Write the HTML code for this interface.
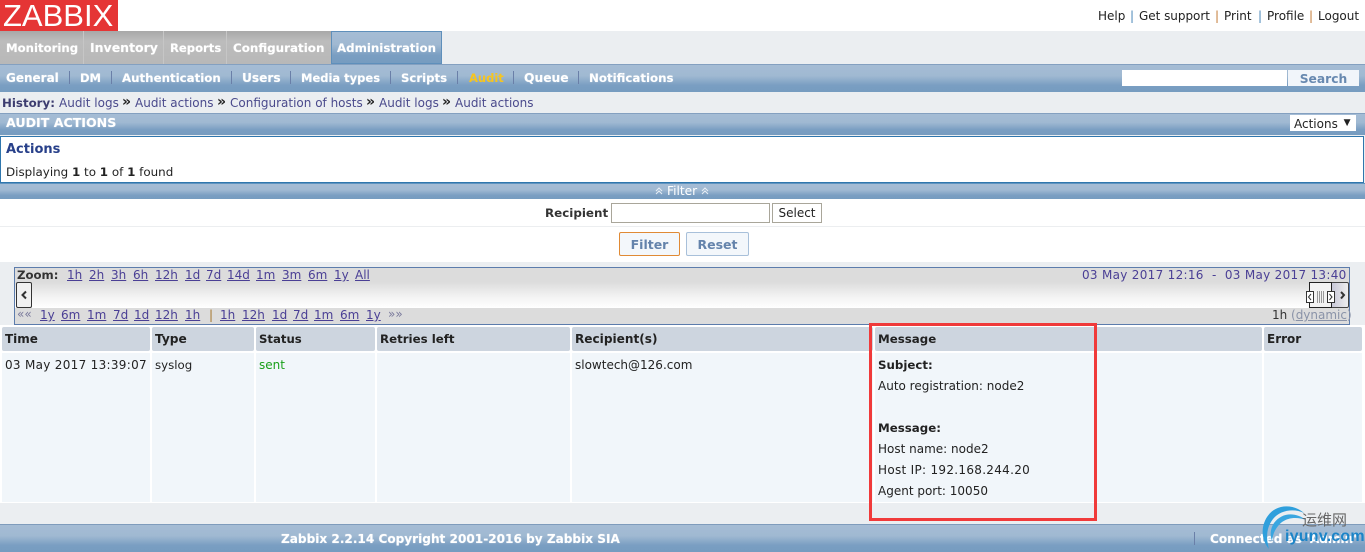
<!DOCTYPE html>
<html><head><meta charset="utf-8">
<style>
html,body{margin:0;padding:0;background:#ebeef1;width:1365px;height:552px;overflow:hidden}
body{position:relative;font-family:"DejaVu Sans","Liberation Sans",sans-serif;font-size:12px;color:#222}
.a{position:absolute;white-space:nowrap;line-height:14px}
.box{position:absolute}
.bar{background:linear-gradient(#a5bcd5 0,#a0b9d2 40%,#7a9ec2 75%,#769cc0 100%)}
.w{color:#fff;font-weight:bold;text-shadow:0 0 1px rgba(255,255,255,.6)}
.l{color:#4a4a8c}
.u{color:#4a3f95;text-decoration:underline}
.sep{position:absolute;width:1px;height:13px;background:#6a7fa8}
.th{position:absolute;top:327px;height:24px;background:#cdd5df;border-radius:2px}
.td{position:absolute;top:353px;height:149px;background:#f1f6fa}
.h{font-weight:bold;top:332px}
b{font-weight:bold}
</style></head><body>
<div class="box" style="left:0;top:0;width:1365px;height:31px;background:#fff"></div>
<div class="box" style="left:0;top:0;width:118px;height:31px;background:#e53535"></div>
<div class="a" style="left:3px;top:-2px;font:31px/36px 'Liberation Sans',sans-serif;color:#fff">ZABBIX</div>
<div class="a" style="left:1098px;top:9px">Help</div>
<div class="a" style="left:1130px;top:9px;color:#4a86b8">|</div>
<div class="a" style="left:1139px;top:9px;letter-spacing:-.03px">Get support</div>
<div class="a" style="left:1215px;top:9px;color:#c47a36">|</div>
<div class="a" style="left:1224px;top:9px">Print</div>
<div class="a" style="left:1258px;top:9px;color:#4a86b8">|</div>
<div class="a" style="left:1267px;top:9px">Profile</div>
<div class="a" style="left:1309px;top:9px;color:#c47a36">|</div>
<div class="a" style="left:1318px;top:9px">Logout</div>

<div class="box" style="left:0;top:31px;width:331px;height:33px;background:#c6c6c6"></div>
<div class="box" style="left:0;top:31px;width:83px;height:33px;background:linear-gradient(#a8a8a8,#bcbcbc 30%,#b8b8b8)"></div>
<div class="box" style="left:84px;top:31px;width:79px;height:33px;background:linear-gradient(#a8a8a8,#bcbcbc 30%,#b8b8b8)"></div>
<div class="box" style="left:164px;top:31px;width:62px;height:33px;background:linear-gradient(#a8a8a8,#bcbcbc 30%,#b8b8b8)"></div>
<div class="box" style="left:227px;top:31px;width:104px;height:33px;background:linear-gradient(#a8a8a8,#bcbcbc 30%,#b8b8b8)"></div>
<div class="box bar" style="left:331px;top:31px;width:109px;height:31px;border:1px solid #5e8fbb"></div>
<div class="a w" style="left:6px;top:41px;font-size:11.7px">Monitoring</div>
<div class="a w" style="left:90px;top:41px;font-size:12.5px">Inventory</div>
<div class="a w" style="left:170px;top:41px;font-size:11.6px">Reports</div>
<div class="a w" style="left:233px;top:41px;font-size:11.9px">Configuration</div>
<div class="a w" style="left:337px;top:41px;font-size:11.8px">Administration</div>

<div class="box bar" style="left:0;top:64px;width:1365px;height:28px;border-top:1px solid #84a0c0;box-sizing:border-box"></div>
<div class="a w" style="left:6px;top:71px;font-size:12px">General</div><div class="sep" style="left:69px;top:71px"></div>
<div class="a w" style="left:80px;top:71px;font-size:11.5px">DM</div><div class="sep" style="left:111px;top:71px"></div>
<div class="a w" style="left:122px;top:71px;font-size:11.8px">Authentication</div><div class="sep" style="left:231px;top:71px"></div>
<div class="a w" style="left:242px;top:71px;font-size:12.2px">Users</div><div class="sep" style="left:290px;top:71px"></div>
<div class="a w" style="left:301px;top:71px;font-size:11.5px">Media types</div><div class="sep" style="left:390px;top:71px"></div>
<div class="a w" style="left:401px;top:71px;font-size:11.7px">Scripts</div><div class="sep" style="left:457px;top:71px"></div>
<div class="a w" style="left:469px;top:71px;font-size:11.5px;color:#f7c51e;text-shadow:none">Audit</div><div class="sep" style="left:513px;top:71px"></div>
<div class="a w" style="left:524px;top:71px;font-size:12.3px">Queue</div><div class="sep" style="left:578px;top:71px"></div>
<div class="a w" style="left:589px;top:71px;font-size:11.8px">Notifications</div>
<div class="box" style="left:1122px;top:70px;width:165px;height:16px;background:#fff"></div>
<div class="box" style="left:1288px;top:70px;width:71px;height:16px;background:#f1f5fa;color:#6889b0;font-weight:bold;font-size:12.3px;line-height:18px;text-align:center">Search</div>

<div class="a" style="left:2px;top:96px;font-weight:bold;color:#3d3d70;font-size:11.8px">History:</div>
<div class="a l" style="left:59px;top:96px">Audit logs</div>
<div class="a" style="left:122px;top:95px;font-weight:bold;color:#222;font-size:14px">»</div>
<div class="a l" style="left:135px;top:96px">Audit actions</div>
<div class="a" style="left:217px;top:95px;font-weight:bold;color:#222;font-size:14px">»</div>
<div class="a l" style="left:230px;top:96px">Configuration of hosts</div>
<div class="a" style="left:366px;top:95px;font-weight:bold;color:#222;font-size:14px">»</div>
<div class="a l" style="left:379px;top:96px">Audit logs</div>
<div class="a" style="left:442px;top:95px;font-weight:bold;color:#222;font-size:14px">»</div>
<div class="a l" style="left:455px;top:96px">Audit actions</div>

<div class="box bar" style="left:0;top:113px;width:1365px;height:22px;border-top:1px solid #84a0c0;box-sizing:border-box"></div>
<div class="a w" style="left:6px;top:116px;font-size:12.6px">AUDIT ACTIONS</div>
<div class="box" style="left:1290px;top:115px;width:66px;height:16px;background:#fff;font-size:12px;line-height:18px;padding-left:4px;box-sizing:border-box">Actions <span style="font-size:9px;position:relative;top:-3px;left:2px">▼</span></div>

<div class="box" style="left:0;top:136px;width:1364px;height:47px;background:#fff;border:1px solid #2f76ad;box-sizing:border-box"></div>
<div class="a" style="left:6px;top:143px;font-weight:bold;color:#28408a;font-size:13px">Actions</div>
<div class="a" style="left:6px;top:165px;font-size:11.9px">Displaying <b>1</b> to <b>1</b> of <b>1</b> found</div>

<div class="box bar" style="left:0;top:183px;width:1365px;height:16px;border-top:1px solid #5f93bf;box-sizing:border-box"></div>
<svg class="box" style="left:655px;top:186px" width="54" height="10"><path d="M1 5 4 2 7 5M1 8 4 5 7 8M47 5 50 2 53 5M47 8 50 5 53 8" fill="none" stroke="#e8eef5"/></svg>
<div class="a" style="left:667px;top:184px;color:#fff;font-size:12.2px">Filter</div>
<div class="box" style="left:0;top:199px;width:1365px;height:63px;background:#fff"></div>
<div class="box" style="left:0;top:226px;width:1365px;height:1px;background:#eceef0"></div>
<div class="a" style="left:545px;top:206px;font-weight:bold;color:#333;font-size:11.9px">Recipient</div>
<div class="box" style="left:611px;top:203px;width:159px;height:20px;background:#fff;border:1px solid #a9a69a;box-sizing:border-box"></div>
<div class="box" style="left:772px;top:203px;width:50px;height:20px;background:#fff;border:1px solid #a9a69a;box-sizing:border-box;text-align:center;line-height:19px">Select</div>
<div class="box" style="left:619px;top:232px;width:61px;height:24px;background:#f3f7fb;border:1px solid #e08a35;border-radius:2px;box-sizing:border-box;text-align:center;line-height:23px;font-weight:bold;color:#6483ab;font-size:12.5px">Filter</div>
<div class="box" style="left:686px;top:232px;width:63px;height:24px;background:#f3f7fb;border:1px solid #a8c0da;border-radius:2px;box-sizing:border-box;text-align:center;line-height:23px;font-weight:bold;color:#6483ab;font-size:12.5px">Reset</div>

<div class="box" style="left:14px;top:267px;width:1336px;height:58px;background:#dcdcdc;border:1px solid #5c7cac;box-sizing:border-box"></div>
<div class="box" style="left:15px;top:282px;width:1334px;height:26px;background:linear-gradient(#dcdcdc,#f4f4f4 60%,#fff)"></div>
<div class="a" style="left:17px;top:268px;font-weight:bold;color:#333;font-size:11.7px">Zoom:</div>
<div class="a u" style="left:67px;top:268px">1h</div><div class="a u" style="left:89px;top:268px">2h</div><div class="a u" style="left:111px;top:268px">3h</div><div class="a u" style="left:133px;top:268px">6h</div><div class="a u" style="left:155px;top:268px">12h</div><div class="a u" style="left:185px;top:268px">1d</div><div class="a u" style="left:206px;top:268px">7d</div><div class="a u" style="left:227px;top:268px">14d</div><div class="a u" style="left:256px;top:268px">1m</div><div class="a u" style="left:282px;top:268px">3m</div><div class="a u" style="left:308px;top:268px">6m</div><div class="a u" style="left:334px;top:268px">1y</div><div class="a u" style="left:355px;top:268px">All</div>
<div class="a" style="left:1082px;top:268px;color:#4a3f95;letter-spacing:.3px">03 May 2017 12:16 &nbsp;-&nbsp; 03 May 2017 13:40</div>

<div class="box" style="left:16px;top:282px;width:16px;height:26px;background:#f1f1f1;border:1px solid #333;border-radius:2px;box-sizing:border-box"></div>
<svg class="box" style="left:16px;top:282px" width="16" height="26"><path d="M10 9.500 6.500 13 10 16.500" fill="none" stroke="#333" stroke-width="2"/></svg>

<div class="a" style="left:17px;top:307px;color:#7a7a9c;font-size:12px">««</div>
<div class="a u" style="left:40px;top:308px">1y</div><div class="a u" style="left:61px;top:308px">6m</div><div class="a u" style="left:87px;top:308px">1m</div><div class="a u" style="left:113px;top:308px">7d</div><div class="a u" style="left:134px;top:308px">1d</div><div class="a u" style="left:155px;top:308px">12h</div><div class="a u" style="left:185px;top:308px">1h</div>
<div class="a" style="left:209px;top:308px;color:#a5762a">|</div>
<div class="a u" style="left:220px;top:308px">1h</div><div class="a u" style="left:242px;top:308px">12h</div><div class="a u" style="left:272px;top:308px">1d</div><div class="a u" style="left:293px;top:308px">7d</div><div class="a u" style="left:314px;top:308px">1m</div><div class="a u" style="left:340px;top:308px">6m</div><div class="a u" style="left:366px;top:308px">1y</div>
<div class="a" style="left:388px;top:307px;color:#7a7a9c;font-size:12px">»»</div>
<div class="a" style="left:1272px;top:308px;color:#333">1h</div>
<div class="a" style="left:1291px;top:308px;color:#8a93a8">(<span style="text-decoration:underline">dynamic</span>)</div>

<div class="box" style="left:1309px;top:282px;width:23px;height:26px;background:#f2f2f2;border:1px solid #222;box-sizing:border-box"></div>
<div class="box" style="left:1332px;top:282px;width:17px;height:26px;background:linear-gradient(90deg,#c8c8d8,#eee);border:1px solid #444;border-left:0;border-radius:0 2px 2px 0;box-sizing:border-box"></div>
<svg class="box" style="left:1305px;top:282px" width="46" height="26"><rect x="1.500" y="9.500" width="7" height="11" fill="#fff" stroke="#333"/><rect x="22.500" y="9.500" width="7" height="11" fill="#fff" stroke="#333"/><path d="M6 12 3.500 15 6 18M24.500 12 27 15 24.500 18" fill="none" stroke="#333"/><path d="M36 10 39 13 36 16.500" fill="none" stroke="#333" stroke-width="2"/><path d="M12.500 9v12M14.500 9v12M16.500 9v12M18.500 9v12" stroke="#999"/></svg>

<div class="box" style="left:0;top:325px;width:1365px;height:178px;background:#fff"></div>
<div class="th" style="left:2px;width:148px"></div><div class="a h" style="left:5px;font-size:12px">Time</div>
<div class="th" style="left:152px;width:102px"></div><div class="a h" style="left:155px;font-size:12.2px">Type</div>
<div class="th" style="left:256px;width:119px"></div><div class="a h" style="left:259px;font-size:11.7px">Status</div>
<div class="th" style="left:377px;width:193px"></div><div class="a h" style="left:380px;font-size:11.8px">Retries left</div>
<div class="th" style="left:572px;width:301px"></div><div class="a h" style="left:575px;font-size:12.1px">Recipient(s)</div>
<div class="th" style="left:875px;width:387px"></div><div class="a h" style="left:878px;font-size:11.8px">Message</div>
<div class="th" style="left:1264px;width:98px"></div><div class="a h" style="left:1267px;font-size:12px">Error</div>

<div class="td" style="left:2px;width:148px"></div>
<div class="td" style="left:152px;width:102px"></div>
<div class="td" style="left:256px;width:119px"></div>
<div class="td" style="left:377px;width:193px"></div>
<div class="td" style="left:572px;width:301px"></div>
<div class="td" style="left:875px;width:387px"></div>
<div class="td" style="left:1264px;width:98px"></div>

<div class="a" style="left:5px;top:358px;letter-spacing:.3px">03 May 2017 13:39:07</div>
<div class="a" style="left:155px;top:358px;font-size:11.8px">syslog</div>
<div class="a" style="left:259px;top:358px;color:#1aa01a">sent</div>
<div class="a" style="left:575px;top:358px">slowtech@126.com</div>
<div class="a" style="left:878px;top:358px;font-weight:bold;font-size:11.8px">Subject:</div>
<div class="a" style="left:878px;top:379px">Auto registration: node2</div>
<div class="a" style="left:878px;top:421px;font-weight:bold;font-size:11.8px">Message:</div>
<div class="a" style="left:878px;top:442px">Host name: node2</div>
<div class="a" style="left:878px;top:463px;letter-spacing:.3px">Host IP: 192.168.244.20</div>
<div class="a" style="left:878px;top:484px">Agent port: 10050</div>

<div class="box" style="left:869px;top:323px;width:228px;height:198px;border:3px solid #f03a3a;box-sizing:border-box"></div>

<div class="box bar" style="left:0;top:524px;width:1365px;height:28px;border-top:1px solid #7f9cbc;box-sizing:border-box"></div>
<div class="a w" style="left:281px;top:532px;font-size:12.1px">Zabbix 2.2.14 Copyright 2001-2016 by Zabbix SIA</div>
<div class="sep" style="left:1194px;top:532px"></div>
<div class="a w" style="left:1210px;top:532px;font-size:12.1px">Connected as 'Admin'</div>

<svg class="box" style="left:1258px;top:503px" width="60" height="49"><path d="M46 10C36 1 18 0 9 14 2 25 4 38 11 46 8 36 8 25 15 16 22 7 36 5 46 10Z" fill="#2f9fdc"/><path d="M48 17C38 9 24 9 16 20 12 26 12 33 14 38 15 30 18 24 24 19 31 14 40 14 48 17Z" fill="#3aa6e0"/></svg>
<div class="a" style="left:1302px;top:511px;font:15px/18px 'Noto Sans CJK SC',sans-serif;color:#666">运维网</div>
<div class="a" style="left:1285px;top:527px;font:bold 16px/20px 'Liberation Sans',sans-serif;color:#1b84c8;letter-spacing:.2px">iyunv.com</div>
</body></html>
